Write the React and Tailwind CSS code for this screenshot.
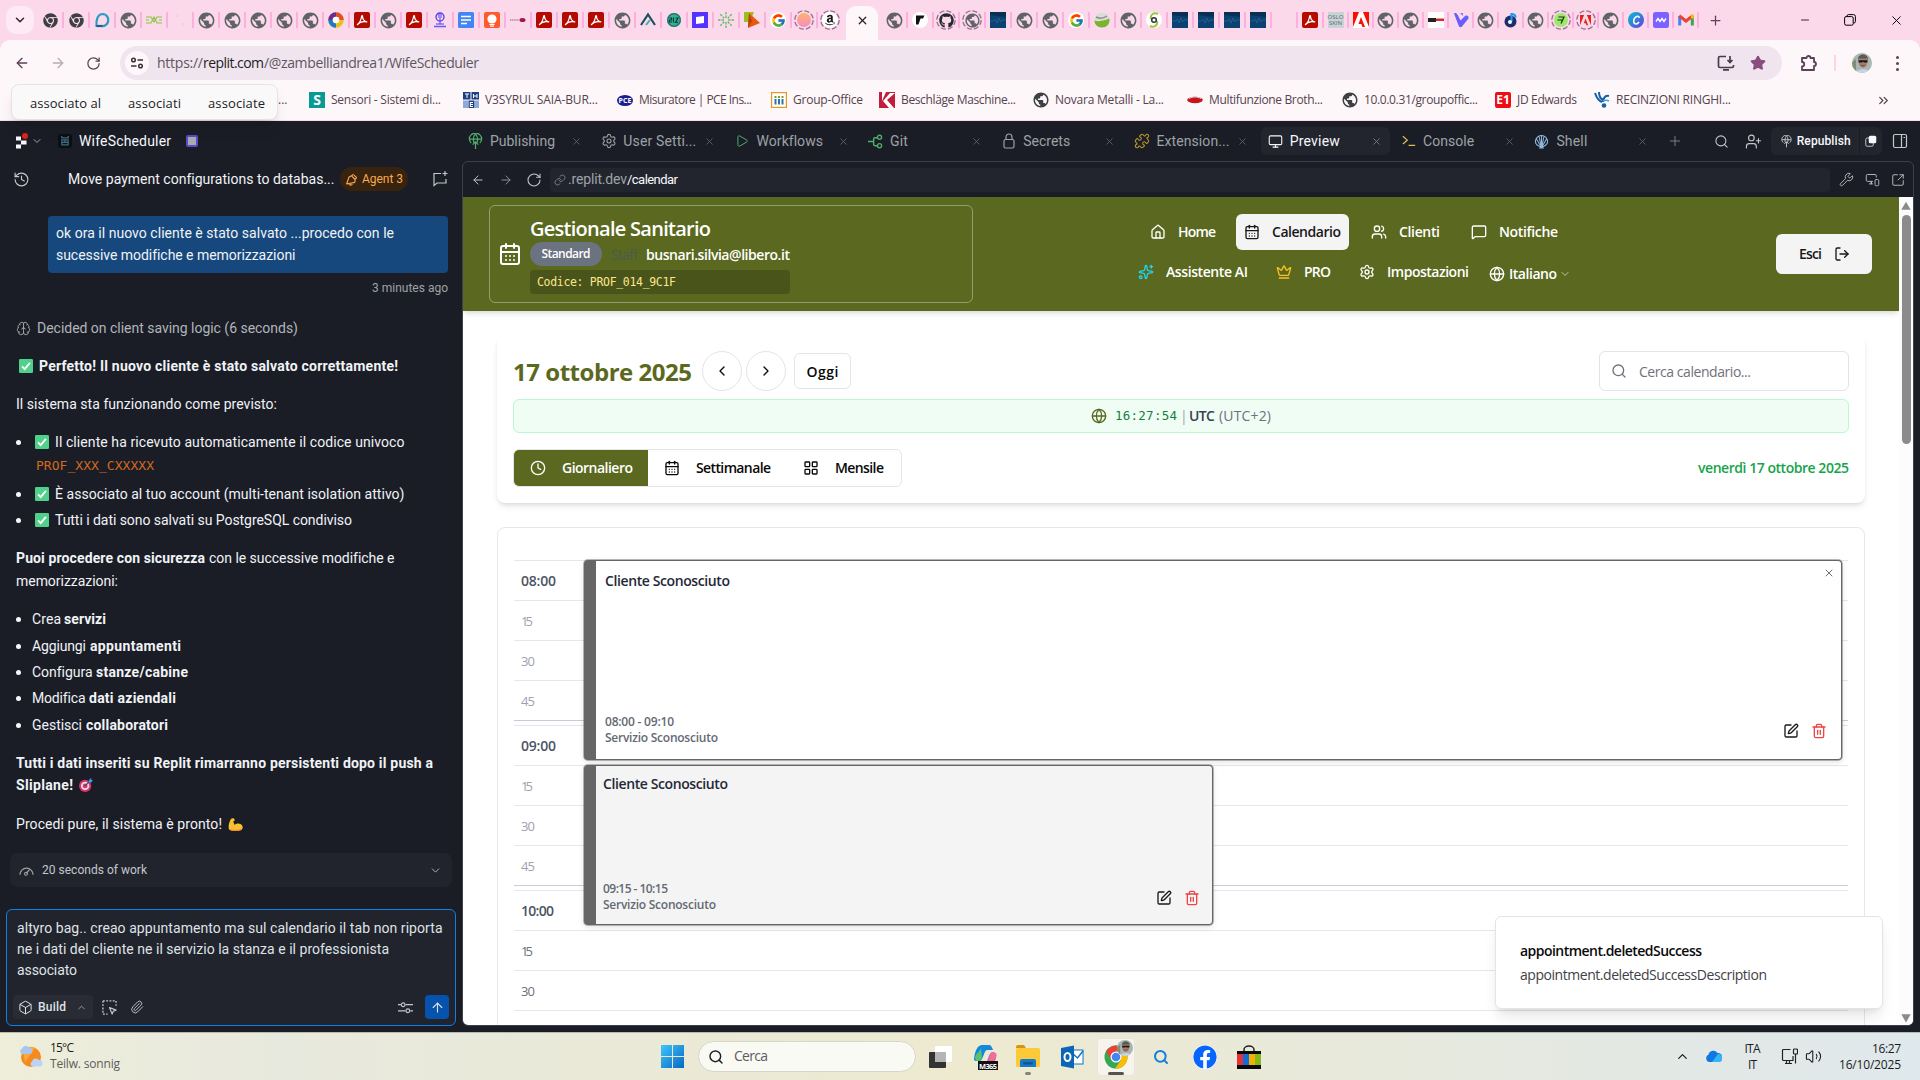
import React, { useLayoutEffect, useRef } from "react";
import {
  ArrowLeft, ArrowRight, RotateCw, ChevronDown, ChevronUp, ChevronLeft, ChevronRight, ChevronsRight,
  X, Plus, Minus, Star, Search, UserPlus, Wrench, MonitorSmartphone, SquareArrowOutUpRight, History,
  Brain, Box, Paperclip, Link, Play, Puzzle, Monitor, Settings, CalendarDays, House, Users,
  MessageSquare, Sparkles, Crown, Globe, LogOut, Clock, LayoutGrid, SquarePen, Trash2, Volume2,
} from "lucide-react";
import { MdPublic } from "react-icons/md";
import { FcGoogle } from "react-icons/fc";
import { FaChrome, FaGithub, FaAmazon, FaFacebook } from "react-icons/fa";

/* Single-line text that spreads its letters to fill the given width. */
function T({ w, className = "", children }) {
  const ref = useRef(null);
  useLayoutEffect(() => {
    const el = ref.current;
    el.style.letterSpacing = "0px";
    const n = String(children).length;
    const natural = el.firstChild.getBoundingClientRect().width;
    if (n > 1) el.style.letterSpacing = (w - natural) / (n - 1) + "px";
  });
  return (
    <span ref={ref} className={"inline-block shrink-0 whitespace-pre " + className} style={{ width: w }}>
      <span>{children}</span>
    </span>
  );
}

/* ------------------------------ favicons ------------------------------ */

function Svg({ s = 16, children, vb = "0 0 16 16", className = "" }) {
  return <svg width={s} height={s} viewBox={vb} fill="none" className={"shrink-0 " + className}>{children}</svg>;
}

function Pdf() {
  return (
    <Svg>
      <rect width="16" height="16" rx="2" fill="#b30b00" />
      <path d="M3.4 12.6c1.6-1 3.6-4.400 4.300-8.400.1-.8.800-.8.800 0 .1 2.600 1.800 5 4.300 5.600M3.400 12.600c2-2.200 5.800-3.500 9.300-2.600" stroke="#fff" strokeWidth="1.200" strokeLinecap="round" />
    </Svg>
  );
}

function Dashed({ children }) {
  return (
    <span className="flex size-5 shrink-0 items-center justify-center">
      <svg width="20" height="20" viewBox="0 0 20 20" fill="none" className="absolute">
        <circle cx="10" cy="10" r="9.200" stroke="#9c7094" strokeWidth="1.300" strokeDasharray="5.200 2.025" />
      </svg>
      {children}
    </span>
  );
}

const PublicIcon = () => <MdPublic size={19} className="shrink-0 text-[#5f6368]" />;
const NavyPic = () => (
  <Svg>
    <rect width="16" height="16" fill="#0b4272" />
    <path d="M0 0h16v5L0 3z" fill="#0a2f55" />
    <path d="M0 9h4l1.500-2 1.500 4 2-5 1.500 4 1.500-2H16" stroke="#2a6796" strokeWidth=".7" />
  </Svg>
);

function Fav({ k }) {
  switch (k) {
    case "chrome": return <FaChrome size={15} className="shrink-0 text-[#3c4043]" />;
    case "globe": return <PublicIcon />;
    case "pdf": return <Pdf />;
    case "navy": return <NavyPic />;
    case "google": return <span className="flex size-4 shrink-0 items-center justify-center rounded-full bg-white"><FcGoogle size={15} /></span>;
    case "drop": return <Svg><path d="M9 2a5.500 5.500 0 1 1-1.500 12H2.500C2 8 3.500 2 9 2Z" stroke="#2a9bc4" strokeWidth="2.200" /><path d="M2.500 14h6" stroke="#1c5f8a" strokeWidth="2.200" /></Svg>;
    case "star": return <Svg><path d="M0 5h5l3 5 3-5h5M0 11h5l3-6 3 6h5M0 8h3M13 8h3" stroke="#8cc63f" strokeWidth="1.100" /></Svg>;
    case "faint": return <Svg><circle cx="5" cy="4" r="1" fill="#f1cbe0" /><circle cx="11" cy="12" r="1.300" fill="#f3cfe2" /></Svg>;
    case "ring": return <Svg><circle cx="8" cy="8" r="5.500" stroke="#e7c21c" strokeWidth="4.500" /><path d="M8 2.500A5.500 5.500 0 0 1 13.500 8" stroke="#e0502d" strokeWidth="4.500" /><path d="M2.500 8A5.500 5.500 0 0 1 8 2.500" stroke="#6a2c91" strokeWidth="4.500" /><path d="M2.500 8A5.500 5.500 0 0 0 8 13.500" stroke="#1b7cc0" strokeWidth="4.500" /><circle cx="8" cy="8" r="3.300" fill="#fff" /></Svg>;
    case "figure": return <Svg><circle cx="8" cy="5" r="4" stroke="#4b3cf0" strokeWidth="1.300" /><path d="M6 3h4M6 5h4M7 7h2M8 9v3M4 12h8" stroke="#4b3cf0" /><path d="M2 14.500h12" stroke="#6a5cf5" strokeWidth="1.600" /></Svg>;
    case "docs": return <Svg><rect width="16" height="16" rx="1.500" fill="#4285f4" /><path d="M3 4.500h10M3 8h10M3 11.500h6" stroke="#fff" strokeWidth="1.700" /></Svg>;
    case "orange": return <Svg><rect width="16" height="16" rx="2" fill="#ff5a2c" /><circle cx="8" cy="7" r="4.600" fill="#fff" /><path d="M5.500 12.500h5M6 14.200h4" stroke="#fff" strokeWidth="1.200" /></Svg>;
    case "brand": return <Svg><path d="M0 8h9" stroke="#b98aa2" strokeWidth="1.300" strokeDasharray="1.500 .6" /><ellipse cx="12.500" cy="8" rx="3" ry="2" fill="#a01848" /></Svg>;
    case "tri": return <Svg><path d="M1 13 8 2.500 15 13" stroke="#1f4d63" strokeWidth="2.200" /><path d="M6 13l4-5" stroke="#31b5a6" strokeWidth="2" /></Svg>;
    case "ball": return <Svg><circle cx="8" cy="8" r="7" fill="#2fb58a" /><circle cx="8" cy="8" r="6.300" stroke="#2c6b78" strokeWidth="1.300" /><path d="M3.500 6h2v2h-2v2h2.500M7.500 5.500v5M9.500 6h2.500l-2.500 4.500H12" stroke="#12354d" strokeWidth="1.200" /></Svg>;
    case "purple": return <Svg><rect width="16" height="16" fill="#5433ff" /><path d="M4 5l8-1v7l-8 1z" fill="#fff" /></Svg>;
    case "burst": return <Svg><path d="M8 0v6M8 10v6M0 8h6M10 8h6M2.300 2.300l4 4M9.700 9.700l4 4M13.700 2.300l-4 4M6.300 9.700l-4 4" stroke="#63b96a" strokeWidth="1.300" strokeDasharray="2.500 1" /></Svg>;
    case "kite": return <Svg><path d="M0 0h10l-4 10H0z" fill="#9bbf1e" /><path d="M5 1l11 10-12 5z" fill="#e8590c" /><path d="M5 1l3 8-4 7z" fill="#b8410a" /></Svg>;
    case "peach": return <Dashed><span className="size-3.5 rounded-full bg-linear-to-b from-[#ffb35c] to-[#f58ac4]" /></Dashed>;
    case "amazon": return <Dashed><span className="flex size-4 items-center justify-center rounded-full bg-white"><FaAmazon size={12} className="text-[#1b1b1b]" /></span></Dashed>;
    case "bolt": return <Svg><circle cx="8" cy="8" r="8" fill="#fff" /><path d="M4 3.500h8.500L11 6.500H8.500l-2 6H4z" fill="#111" /></Svg>;
    case "github": return <Dashed><FaGithub size={15} className="text-[#24292f]" /></Dashed>;
    case "dglobe": return <Dashed><MdPublic size={17} className="text-[#5f6368]" /></Dashed>;
    case "bowl": return <Svg><circle cx="8" cy="8" r="7.500" fill="#d8ddd6" /><path d="M.5 8.500c3 1.500 8 .5 15-2 .5 6-3 9-7.500 9S.5 12.500.5 8.500Z" fill="#7ab42c" /><path d="M2 5c4 2 8 1 11-1" stroke="#8b9188" strokeWidth="1.500" /></Svg>;
    case "swirl": return <Svg><circle cx="8" cy="8" r="8" fill="#fff" /><path d="M12 2C7 0 4 3 5 7M4 14c5 2 8-1 7-5" stroke="#94c83d" strokeWidth="2" /><circle cx="8" cy="8" r="2.300" stroke="#333" strokeWidth="1.500" /></Svg>;
    case "oslo": return <span className="flex h-4 w-4 shrink-0 flex-col items-center justify-center bg-[#c9d3d6] text-[6px] leading-[6px] text-[#59666b]"><span>OSLO</span><span>SKIN</span></span>;
    case "adobe": return <Svg><rect width="16" height="16" fill="#fff" /><path d="M0 0h6L0 15zM16 0h-6l6 15zM8 5l4 10H9.500l-1.200-3H5.500z" fill="#fa0f00" /></Svg>;
    case "pen": return <Svg><rect width="16" height="16" fill="#fff" /><path d="M0 6h8v4H0z" fill="#222" /><path d="M8 6.500h8v2.500H8z" fill="#d42a2a" /></Svg>;
    case "vee": return <Svg><path d="M1 1.500c2-1 3 0 4 2l2.500 5L12 4c2-1 4 0 3.500 2.500L9 14.500c-1 1-2 1-3 0z" fill="#6a5cff" /><path d="M7 1h3v3z" fill="#8a6cff" /></Svg>;
    case "note": return <Svg><circle cx="7.500" cy="9.500" r="6" fill="#1c2f6b" /><path d="M8.500 1v8.500M8.500 2c2 0 4 1 4 3.500" stroke="#2196f3" strokeWidth="2.200" /><circle cx="7" cy="10" r="2" fill="#fff" /></Svg>;
    case "wise": return <Dashed><span className="flex size-3.5 items-center justify-center rounded-full bg-[#9fe870]"><Svg s={8}><path d="M3 2h11l-6 13M1 8h9" stroke="#163300" strokeWidth="2.400" /></Svg></span></Dashed>;
    case "adobeD": return <Dashed><Svg s={11}><path d="M0 0h6L0 15zM16 0h-6l6 15zM8 5l4 10H9.500l-1.200-3H5.500z" fill="#e8231a" /></Svg></Dashed>;
    case "canva": return <Svg><defs><linearGradient id="cv" x1="0" y1="0" x2="1" y2="1"><stop offset="0" stopColor="#00c4cc" /><stop offset="1" stopColor="#6a3be4" /></linearGradient></defs><circle cx="8" cy="8" r="8" fill="url(#cv)" /><path d="M11.200 6c0-3-4.800-2-5.500 2.500-.4 4 3.300 4.500 5.300 1.500" stroke="#fff" strokeWidth="1.500" /></Svg>;
    case "wave": return <Svg><rect width="16" height="16" rx="2.500" fill="#7b61ff" /><path d="M3 9.500l2-3 2 3 2-3 2 3 2-3" stroke="#fff" strokeWidth="1.400" /></Svg>;
    case "gmail": return <Svg><path d="M1.700 4v9.500" stroke="#4285f4" strokeWidth="3" /><path d="M14.300 4v9.500" stroke="#34a853" strokeWidth="3" /><path d="M1.200 3.800 8 9l6.800-5.200" stroke="#ea4335" strokeWidth="3" /><path d="M13 2.500l2.800 0v4l-2.800 0z" fill="#fbbc04" /></Svg>;
    default: return <span className="size-4 shrink-0" />;
  }
}

const TABS_A = ["chrome", "chrome", "drop", "globe", "star", "faint", "globe", "globe", "globe", "globe", "globe", "ring", "pdf", "globe", "pdf", "figure", "docs", "orange", "brand", "pdf", "pdf", "pdf", "globe", "tri", "ball", "purple", "burst", "kite", "google", "peach", "amazon"];
const TABS_B = ["globe", "bolt", "github", "dglobe", "navy", "globe", "globe", "google", "bowl", "globe", "swirl", "navy", "navy", "navy", "navy", "", "pdf"];
const TABS_C = ["oslo", "adobe", "globe", "globe", "pen", "vee", "globe", "note", "globe", "wise", "adobeD", "globe", "canva", "wave", "gmail"];

function MiniTab({ k, wide = true, sep = true }) {
  return (
    <div className={"relative flex h-4 shrink-0 items-center justify-center " + (wide ? "w-[26px]" : "w-[25px]")}>
      <Fav k={k} />
      {sep && <span className="absolute -right-px top-0 h-4 w-[2px] bg-[#fbb0de]" />}
    </div>
  );
}

function TabStrip() {
  return (
    <div className="flex h-10 items-center bg-[#fbd9ea]">
      <div className="ml-1.5 flex size-7 shrink-0 items-center justify-center rounded-[10px] bg-[#feeaf4]"><ChevronDown size={14} strokeWidth={2.600} className="text-[#33262f]" /></div>
      <div className="ml-[3px] flex">
        {TABS_A.map((k, i) => <MiniTab key={i} k={k} sep={i !== TABS_A.length - 1} />)}
      </div>
      <div className="ml-[3px] mt-1.5 flex h-[34px] w-8 shrink-0 items-center justify-center rounded-t-[10px] bg-[#fef7f9]"><X size={13} strokeWidth={2.400} className="mb-1.5 text-[#2b2228]" /></div>
      <div className="ml-[3px] flex">
        {TABS_B.map((k, i) => <MiniTab key={i} k={k} />)}
        {TABS_C.map((k, i) => <MiniTab key={i} k={k} wide={false} />)}
      </div>
      <Plus size={15} className="ml-[10px] shrink-0 text-[#5c4458]" />
      <div className="ml-auto mr-4 flex items-center gap-[33px] text-black">
        <Minus size={12} strokeWidth={1.600} />
        <Svg s={12} vb="0 0 12 12"><path d="M3 2.500V2A1.500 1.500 0 0 1 4.500.600h5A1.900 1.900 0 0 1 11.400 2.500v5A1.500 1.500 0 0 1 10 9h-.5" stroke="#000" /><rect x=".6" y="2.600" width="8.600" height="8.600" rx="1.500" stroke="#000" /></Svg>
        <X size={15} strokeWidth={1.500} />
      </div>
    </div>
  );
}

function Avatar({ small }) {
  return (
    <svg width={small ? 16 : 20} height={small ? 16 : 20} viewBox="0 0 20 20" className="shrink-0 rounded-full">
      <rect width="20" height="20" fill="#a9b7b4" />
      <path d="M0 20V9l4-3v14z" fill="#7d8f78" />
      <ellipse cx="11" cy="9" rx="4.300" ry="5.800" fill="#a87c68" />
      <path d="M6 7.500c-1-8 11-8 10 0l-1.200-2H7.200z" fill="#5b5957" />
      <path d="M6.500 7.200h9v2.200h-3.600l-.9-1-.9 1H6.500z" fill="#16161a" />
      <path d="M8.500 12c1.500 1 3.500 1 5 0" stroke="#6d4a3d" fill="none" />
      <path d="M4 20c1-5 13-5 14 0z" fill="#c8d3e6" />
    </svg>
  );
}

function Toolbar() {
  return (
    <div className="bg-[#fbd9ea]">
      <div className="flex h-[46px] items-center rounded-t-[10px] bg-[#fef7f9] text-[#5a4157]">
        <ArrowLeft size={16} className="ml-[14px]" />
        <ArrowRight size={16} className="ml-5 text-[#b8acb4]" />
        <RotateCw size={15} className="ml-5" />
        <div className="ml-[19px] flex h-[34px] w-[1662px] items-center rounded-full bg-[#f0e5ee]">
          <div className="ml-[5px] flex size-6 items-center justify-center rounded-full bg-[#fdf7fa]">
            <Svg s={14} vb="0 0 14 14"><circle cx="3.500" cy="4" r="1.800" stroke="#3b2f39" strokeWidth="1.500" /><path d="M7.500 4H13M1 10h5.500" stroke="#3b2f39" strokeWidth="1.500" /><circle cx="10.500" cy="10" r="1.800" stroke="#3b2f39" strokeWidth="1.500" /></Svg>
          </div>
          <div className="ml-2 flex text-[14px] leading-5 text-[#5f5560]">
            <T w={46}>https://</T>
            <T w={61} className="text-[#231c22]">replit.com</T>
            <T w={215}>/@zambelliandrea1/WifeScheduler</T>
          </div>
          <Svg s={18} vb="0 0 18 18" className="ml-auto"><path d="M9 2.500H3A1.500 1.500 0 0 0 1.500 4v8A1.500 1.500 0 0 0 3 13.500h12a1.500 1.500 0 0 0 1.500-1.500v-1M13 2v6M10.500 6 13 8.500 15.500 6M6 15.800h6" stroke="#4a3a47" strokeWidth="1.700" /></Svg>
          <Star size={16} fill="#8a4d7e" className="ml-[15px] mr-4 text-[#8a4d7e]" />
        </div>
        <Svg s={20} vb="0 0 20 20" className="ml-[17px]"><path d="M3 5h4.500a2 2 0 0 1 4 0H15v4a2 2 0 0 1 0 4v4H3v-3.500a2.200 2.200 0 0 0 0-4.500z" stroke="#5a4157" strokeWidth="1.800" strokeLinejoin="round" /></Svg>
        <span className="ml-[15px] h-4 w-[2px] bg-[#fbd3ea]" />
        <span className="ml-4"><Avatar /></span>
        <span className="ml-[24px] flex flex-col gap-[3px]"><i className="size-[3px] rounded-full bg-[#5a4157]" /><i className="size-[3px] rounded-full bg-[#5a4157]" /><i className="size-[3px] rounded-full bg-[#5a4157]" /></span>
      </div>
    </div>
  );
}

function Bm({ ml, icon, w, children }) {
  return (
    <div className="flex shrink-0 items-center" style={{ marginLeft: ml }}>
      <span className="flex w-4 shrink-0 justify-center">{icon}</span>
      <T w={w} className="ml-[6px]">{children}</T>
    </div>
  );
}

function Bookmarks() {
  return (
    <div className="relative z-10 flex h-[35px] items-center border-b border-[#f9dcea] bg-[#fef7f9] pb-1.5 text-[12px] text-[#54434f]">
      <span className="w-[278px] shrink-0" />
      <span className="w-[31px] shrink-0">...</span>
      <Bm ml={0} w={110} icon={<span className="flex size-4 items-center justify-center bg-[#0a9a94] text-[14px] font-bold leading-none text-white">S</span>}>Sensori - Sistemi di...</Bm>
      <Bm ml={22} w={113} icon={<Svg><rect width="7.500" height="7.500" fill="#1d3f86" /><rect x="8.500" width="7.500" height="7.500" fill="#1d3f86" /><rect y="8.500" width="5" height="7.500" fill="#8fa9d8" /><rect x="5.500" y="8.500" width="6" height="7.500" fill="#1d3f86" /><rect x="12" y="8.500" width="4" height="7.500" fill="#8fa9d8" /><path d="M2 2h4M4 2v4M10.500 2v4M14 2v4M10.500 4H14M7 10.500h3M7 12.500h3M7 14.500h3M7.300 10v5" stroke="#fff" /></Svg>}>V3SYRUL SAIA-BUR...</Bm>
      <Bm ml={19} w={113} icon={<span className="flex h-[11px] w-4 items-center justify-center rounded-[50%] bg-[#1b1f8c] text-[7px] font-bold leading-none text-white">PCE</span>}>Misuratore | PCE Ins...</Bm>
      <Bm ml={19} w={70} icon={<Svg><rect x=".6" y=".6" width="14.800" height="14.800" fill="#fff" stroke="#e8971e" strokeWidth="1.200" /><path d="M4.500 7v5.500M8 7v5.500M11.500 7v5.500" stroke="#2b78a8" strokeWidth="2" /><path d="M4.500 4v2M8 4v2M11.500 4v2" stroke="#7a9a2a" strokeWidth="2" /></Svg>}>Group-Office</Bm>
      <Bm ml={16} w={115} icon={<Svg><rect width="16" height="16" fill="#c01e3c" /><path d="M3 0l4 0-4 9zM16 1 8 8l7 8H10L4 9l7-8z" fill="#fff" /></Svg>}>Beschläge Maschine...</Bm>
      <Bm ml={17} w={109} icon={<MdPublic size={18} className="shrink-0 text-[#3c4043]" />}>Novara Metalli - La...</Bm>
      <Bm ml={23} w={114} icon={<Svg><ellipse cx="8" cy="8" rx="7.800" ry="3.200" fill="#c4161c" /><path d="M2 6.500c4-2 8-2 12 0" stroke="#d9d9d9" /></Svg>}>Multifunzione Broth...</Bm>
      <Bm ml={19} w={114} icon={<MdPublic size={18} className="shrink-0 text-[#3c4043]" />}>10.0.0.31/groupoffic...</Bm>
      <Bm ml={17} w={60} icon={<span className="flex size-4 items-center justify-center rounded-xs bg-[#ee0d12] text-[12px] font-bold leading-none text-white">E1</span>}>JD Edwards</Bm>
      <Bm ml={17} w={115} icon={<Svg><path d="M1 1c2 6 4 8 7 9M5 0c0 5 2 7 4 8M15 4c-5-1-6 4-6 6" stroke="#1660a8" strokeWidth="2" /><path d="M9 9c2-1 4-1 6 0" stroke="#3aa5e0" strokeWidth="1.600" /><circle cx="10" cy="13.500" r="2.300" fill="#1660a8" /></Svg>}>RECINZIONI RINGHI...</Bm>
      <ChevronsRight size={15} strokeWidth={2} className="ml-auto mr-[29px]" />
      <div className="absolute left-[11px] top-[-2px] flex h-9 w-[267px] items-center rounded-lg border border-[#e8e2e6] bg-[#faf9fa] pl-[18px] pt-[3px] text-[13px] text-[#1c1c1c] shadow-lg">
        <T w={71}>associato al</T>
        <T w={53} className="ml-[27px]">associati</T>
        <T w={57} className="ml-[27px]">associate</T>
      </div>
    </div>
  );
}

/* ------------------------------ editor shell ------------------------------ */

const Tree = ({ s = 17, c = "#4fae6b" }) => (
  <Svg s={s} vb="0 0 18 18"><path d="M4.500 10.500A6.500 6 0 1 1 13.500 10.500M9 1c-2.500 3-2.500 7-1.500 9.500M9 1c2.500 3 2.500 7 1.500 9.500M2.800 6.500h12.400M9 17V9.500M6 12.300 9 9.300l3 3" stroke={c} strokeWidth="1.300" /></Svg>
);

function EdTab({ icon, label, w, active }) {
  return (
    <div className={"mr-[4.300px] flex h-7 w-[129px] shrink-0 items-center rounded-md pl-[6px] " + (active ? "bg-[#23252e] text-[#f5f9fc]" : "text-[#9da2a6]")}>
      <span className="flex w-[17px] shrink-0 justify-center">{icon}</span>
      <T w={w} className="ml-[6px] text-[14px]">{label}</T>
      <X size={11} strokeWidth={1.700} className={"ml-auto mr-2 shrink-0 " + (active ? "text-[#858a92]" : "text-[#666b75]")} />
    </div>
  );
}

function EditorHeader() {
  return (
    <div className="flex h-10 shrink-0 items-center font-['Roboto',sans-serif] text-[#f5f9fc]">
      <div className="flex w-[461px] shrink-0 items-center">
        <Svg s={16} vb="0 0 16 16" className="ml-[15px]"><path d="M1 3.500h5v4H1zM6 7.500h5.500v4H6zM1 11.500h5v4H1z" fill="#f5f9fc" /><circle cx="10" cy="3" r="3" fill="#e5201c" /></Svg>
        <ChevronDown size={12} className="text-[#9da2a6]" />
        <span className="ml-[15px] flex size-[14px] items-center justify-center rounded-[3px] bg-[#0b0f14]"><Svg s={10}><path d="M2 3h12M3 6h10v8H3zM3 10h10M8 6v4M4 3 2 0M12 3l2-3" stroke="#3c6c80" strokeWidth="2" /></Svg></span>
        <T w={92} className="ml-[7px] text-[14px]">WifeScheduler</T>
        <span className="ml-[15px] size-3 rounded-[2px] border-2 border-[#5b4bc4] bg-[#a7abb4]" />
      </div>
      <EdTab icon={<Tree />} label="Publishing" w={65} />
      <EdTab icon={<Settings size={16} strokeWidth={1.600} />} label="User Setti..." w={73} />
      <EdTab icon={<Play size={14} strokeWidth={1.700} className="text-[#4fae6b]" />} label="Workflows" w={66} />
      <EdTab icon={<Svg s={15}><path d="M0 8h6M6 8v-2.500a1.500 1.500 0 0 1 1.500-1.500H10M6 8v3a1.500 1.500 0 0 0 1.500 1.500H10" stroke="#4fae6b" strokeWidth="1.500" /><circle cx="12.300" cy="3.500" r="2.200" stroke="#4fae6b" strokeWidth="1.400" /><circle cx="12.300" cy="12.500" r="2.200" stroke="#4fae6b" strokeWidth="1.400" /></Svg>} label="Git" w={18} />
      <EdTab icon={<Svg s={16}><rect x="3" y="6.500" width="10" height="8.500" rx="1.500" stroke="#9da2a6" strokeWidth="1.200" /><path d="M5 6.500V4a3 3 0 0 1 6 0v2.500" stroke="#9da2a6" strokeWidth="1.200" /></Svg>} label="Secrets" w={47} />
      <EdTab icon={<Puzzle size={16} strokeWidth={1.600} className="text-[#b8962a]" />} label="Extension..." w={73} />
      <EdTab icon={<Monitor size={15} strokeWidth={1.700} />} label="Preview" w={50} active />
      <EdTab icon={<Svg s={14}><path d="M1 2.500 6 7l-5 4.500M7.500 13H15" stroke="#d9bd52" strokeWidth="1.500" /></Svg>} label="Console" w={51} />
      <EdTab icon={<Svg s={15}><path d="M8 14.500 3 11.500C-.5 7.500 3 1.500 8 1.500s8.500 6 5 10zM8 14.500V2M8 14.500 5.300 2.300M8 14.500l2.700-12.200M8 14.500 2.500 5M8 14.500 13.500 5M5.500 15h5" stroke="#8fb8e0" strokeWidth="1.100" /></Svg>} label="Shell" w={31} />
      <Plus size={16} strokeWidth={1.400} className="ml-[6px] shrink-0 text-[#7e838b]" />
      <Search size={15} strokeWidth={1.700} className="ml-[31px] shrink-0 text-[#c2c8cc]" />
      <UserPlus size={17} strokeWidth={1.600} className="ml-[16px] shrink-0 text-[#c2c8cc]" />
      <div className="ml-[9px] flex h-7 w-[88px] shrink-0 items-center rounded-l-md bg-[#23252e] pl-[9px]">
        <Tree s={13} c="#c2c8cc" /><T w={54} className="ml-[4px] text-[12px] font-medium">Republish</T>
      </div>
      <div className="ml-px flex h-7 w-[22px] shrink-0 items-center justify-center rounded-r-md bg-[#23252e]"><Svg s={12}><rect x="1" y="4" width="10" height="11" rx="2" stroke="#c2c8cc" strokeWidth="1.300" /><rect x="5" y="1" width="10" height="10" rx="2" fill="#f5f9fc" /></Svg></div>
      <Svg s={16} className="ml-[10px]"><rect x="1.500" y="1.500" width="13" height="13" rx="1.500" stroke="#c2c8cc" strokeWidth="1.200" /><path d="M9.500 1.500v13M11.500 4.500h1.500" stroke="#c2c8cc" strokeWidth="1.200" /></Svg>
    </div>
  );
}

const Check = () => <Svg s={14} className="mr-[6px]"><rect width="16" height="16" rx="1.500" fill="#4fd18b" /><path d="M3.500 8.500 6.500 11.500 12.500 4.500" stroke="#fff" strokeWidth="2.200" /></Svg>;
const Dot = () => <span className="mr-[11px] size-[5px] shrink-0 rounded-full bg-[#f5f9fc]" />;

function Item({ mt, pre, pw, bold, bw, gap = 4 }) {
  return (
    <div className={"flex h-[22px] items-center " + mt}>
      <Dot />
      <T w={pw}>{pre}</T>
      <span style={{ width: gap }} />
      <T w={bw} className="font-bold">{bold}</T>
    </div>
  );
}

function Chat() {
  return (
    <div className="flex w-[462px] shrink-0 flex-col font-['Roboto',sans-serif] text-[14px] text-[#f0f3f6]">
      <div className="flex h-9 items-center">
        <History size={17} strokeWidth={1.600} className="ml-[13px] text-[#c2c8cc]" />
        <T w={266} className="ml-[38px]">Move payment configurations to databas...</T>
        <div className="ml-[6px] flex h-6 w-[68px] items-center rounded-full bg-[#38230f] pl-[5px] text-[#fba94c]">
          <Svg s={13}><path d="M2 13.500 5 5l3-1.500L12.500 8l-.5 3.500zM8 3.500l2.500-2M12.500 8l2-2.500M5.500 13l.8 2 3-.8M11 2.500l3 3" stroke="#fba94c" strokeWidth="1.400" strokeLinejoin="round" /></Svg>
          <T w={41} className="ml-[4px] text-[12px]">Agent 3</T>
        </div>
        <Svg s={16} className="ml-6"><path d="M9 2.500H2v12l3-2.500h9V8M13 0v5M10.500 2.500h5" stroke="#c2c8cc" strokeWidth="1.200" /></Svg>
      </div>
      <div className="ml-12 mt-[19px] flex h-[57px] w-[400px] flex-col rounded-sm bg-[#16487d] pl-2 pt-[6px] leading-[22px]">
        <T w={338}>ok ora il nuovo cliente è stato salvato ...procedo con le</T>
        <T w={239}>sucessive modifiche e memorizzazioni</T>
      </div>
      <div className="mt-[5px] flex h-5 items-center pl-[372px] text-[12px] text-[#9da2a6]"><T w={76}>3 minutes ago</T></div>
      <div className="flex flex-col pl-4">
        <div className="mt-[19px] flex h-[22px] items-center text-[#b0b5ba]"><Brain size={15} strokeWidth={1.300} className="mr-[6px]" /><T w={261}>Decided on client saving logic (6 seconds)</T></div>
        <div className="mt-4 flex h-[22px] items-center pl-[3px]"><Check /><T w={359} className="font-bold">Perfetto! Il nuovo cliente è stato salvato correttamente!</T></div>
        <div className="mt-4 flex h-[22px] items-center"><T w={261}>Il sistema sta funzionando come previsto:</T></div>
        <div className="mt-4 flex h-[22px] items-center"><Dot /><span className="w-[3px]" /><Check /><T w={349.500}>Il cliente ha ricevuto automaticamente il codice univoco</T></div>
        <div className="mt-[2px] flex h-[22px] items-center pl-5 font-['DejaVu_Sans_Mono',monospace] text-[13px] text-[#d2691e]"><T w={118}>PROF_XXX_CXXXXX</T></div>
        <div className="mt-[6px] flex h-[22px] items-center"><Dot /><span className="w-[3px]" /><Check /><T w={349.500}>È associato al tuo account (multi-tenant isolation attivo)</T></div>
        <div className="mt-1 flex h-[22px] items-center"><Dot /><span className="w-[3px]" /><Check /><T w={297}>Tutti i dati sono salvati su PostgreSQL condiviso</T></div>
        <div className="mt-4 flex h-[22px] items-center"><T w={189} className="font-bold">Puoi procedere con sicurezza</T><T w={185} className="ml-[4px]">con le successive modifiche e</T></div>
        <div className="mt-px flex h-[22px] items-center"><T w={102}>memorizzazioni:</T></div>
        <Item mt="mt-4" pre="Crea" pw={29} bold="servizi" bw={42} gap={3} />
        <Item mt="mt-[5px]" pre="Aggiungi" pw={54} bold="appuntamenti" bw={91} />
        <Item mt="mt-1" pre="Configura" pw={60} bold="stanze/cabine" bw={92} />
        <Item mt="mt-1" pre="Modifica" pw={53} bold="dati aziendali" bw={87} />
        <Item mt="mt-[5px]" pre="Gestisci" pw={50} bold="collaboratori" bw={82} />
        <div className="mt-[17px] flex h-[21px] items-center font-bold"><T w={417}>Tutti i dati inseriti su Replit rimarranno persistenti dopo il push a</T></div>
        <div className="flex h-[22px] items-center font-bold">
          <T w={57}>Sliplane!</T>
          <Svg s={14} className="ml-[6px]"><circle cx="7" cy="9" r="7" fill="#d8336b" /><circle cx="7" cy="9" r="4.800" fill="#f4dbe5" /><circle cx="7" cy="9" r="2.800" fill="#d8336b" /><path d="m7 9 5-5" stroke="#23507a" strokeWidth="1.300" /><path d="m11 5 .5-3L14 0v2.300l2 .2-2 2.500z" fill="#3b9be8" /></Svg>
        </div>
        <div className="mt-[17px] flex h-[22px] items-center">
          <T w={206}>Procedi pure, il sistema è pronto!</T>
          <Svg s={15} className="ml-[6px]"><path d="M3 2.500C4 .8 6.500 1 7 2.500c.4 1.300-.5 2-1.500 2L7 8.500c2-2.200 6.500-2.200 8.300.8 1.300 3.200-.8 5.200-4.300 5.400-4 .2-8 0-9.600-1.200C-.2 11.500 1 6 3 2.500Z" fill="#fbc02d" /><path d="M1 12.500c3 1.500 10 2 14-.5-1 2.500-4 2.800-7 2.800s-6-.6-7-2.300Z" fill="#f2883a" /></Svg>
        </div>
      </div>
      <div className="ml-[10px] mt-[18px] flex h-[34px] w-[442px] items-center rounded-lg bg-[#22242d] text-[12px] text-[#c2c8cc]">
        <Svg s={15} className="ml-[9px]"><path d="M1 12.500A7 7 0 1 1 15 12.500M7.500 11l3.500-3.500" stroke="#9da2a6" strokeWidth="1.300" /><circle cx="7.500" cy="11.500" r="1.600" stroke="#9da2a6" strokeWidth="1.100" /></Svg>
        <T w={105} className="ml-2">20 seconds of work</T>
        <ChevronDown size={13} strokeWidth={1.600} className="ml-auto mr-[10px]" />
      </div>
      <div className="ml-[6px] mt-[22px] flex h-[117px] w-[450px] flex-col rounded-md border border-[#0f7fe8] bg-[#22242d] text-[#dfe3e6]">
        <div className="flex flex-col pl-[10px] pt-2 leading-[21px]">
          <T w={425.500}>altyro bag.. creao appuntamento ma sul calendario il tab non riporta</T>
          <T w={372}>ne i dati del cliente ne il servizio la stanza e il professionista</T>
          <T w={60}>associato</T>
        </div>
        <div className="mt-[14px] flex h-6 items-center px-[6px]">
          <div className="flex h-6 w-20 items-center rounded-sm bg-[#292b35] pl-[5px]">
            <Box size={15} strokeWidth={1.600} /><T w={28} className="ml-[5px] text-[12px] font-medium">Build</T>
            <ChevronUp size={11} className="ml-[10px] text-[#9da2a6]" />
          </div>
          <Svg s={15} className="ml-[9px]"><path d="M1 1h14v5M1 1v14h5" stroke="#c2c8cc" strokeWidth="1.400" strokeDasharray="2 1.500" /><path d="m8 8 7 2.800-3 1.200-1.200 3z" stroke="#c2c8cc" strokeWidth="1.200" strokeLinejoin="round" /></Svg>
          <Paperclip size={14} strokeWidth={1.600} className="ml-[13px] text-[#c2c8cc]" />
          <Svg s={15} className="ml-auto"><path d="M0 5h3M8 5h8M0 11.500h8M13 11.500h3" stroke="#c2c8cc" strokeWidth="1.300" /><circle cx="5.500" cy="5" r="2" stroke="#c2c8cc" strokeWidth="1.200" /><circle cx="10.500" cy="11.500" r="2" stroke="#c2c8cc" strokeWidth="1.200" /></Svg>
          <div className="ml-3 flex h-6 w-6 items-center justify-center rounded-sm bg-[#0653ad]"><ArrowRight size={15} strokeWidth={1.800} className="-rotate-90" /></div>
        </div>
      </div>
    </div>
  );
}

/* ------------------------------ calendar app ------------------------------ */

function NavItem({ icon, w, label, active, className = "" }) {
  return (
    <div className={"flex h-9 items-center gap-3 rounded-md px-2 " + (active ? "bg-[#f4f4f4] text-[#18181b] " : "text-white ") + className}>
      {icon}<T w={w} className="pb-[2px] font-semibold">{label}</T>
    </div>
  );
}

function AppHeader() {
  return (
    <div className="relative z-10 flex h-[114px] shrink-0 bg-[#5b6920] text-[14px] text-white shadow-md">
      <div className="ml-[26px] mt-2 flex h-[98px] w-[484px] items-center gap-2 rounded-md border border-white/35 pl-2">
        <CalendarDays size={24} />
        <div className="flex flex-col">
          <T w={181} className="h-7 pt-px text-[20px] font-semibold leading-7">Gestionale Sanitario</T>
          <div className="flex h-6 items-center">
            <span className="flex h-6 w-[72px] items-center justify-center rounded-full bg-[#6b7280] text-[12px]"><T w={49} className="font-semibold">Standard</T></span>
            <T w={27} className="ml-[9px] text-[#4b5b4c]">Staff</T>
            <T w={144} className="ml-2 font-semibold">busnari.silvia@libero.it</T>
          </div>
          <div className="mt-1 flex h-6 w-[260px] items-center rounded-sm bg-[#49541a] pl-[7px] pt-px font-['DejaVu_Sans_Mono',monospace] text-[11.500px] text-[#fde68a]"><T w={139}>Codice: PROF_014_9C1F</T></div>
        </div>
      </div>
      <div className="ml-[157px] flex flex-col gap-1 pt-[17px]">
        <div className="flex pl-3">
          <NavItem icon={<House size={16} />} w={38} label="Home" />
          <NavItem icon={<CalendarDays size={16} />} w={69} label="Calendario" active className="ml-3" />
          <NavItem icon={<Users size={16} />} w={41} label="Clienti" className="ml-[14px]" />
          <NavItem icon={<MessageSquare size={16} />} w={59} label="Notifiche" className="ml-[15px]" />
        </div>
        <div className="flex">
          <NavItem icon={<Sparkles size={16} className="text-[#22d3ee]" />} w={82} label="Assistente AI" />
          <NavItem icon={<Crown size={16} className="text-[#fbbf24]" />} w={27} label="PRO" className="ml-3" />
          <NavItem icon={<Settings size={16} />} w={82} label="Impostazioni" className="ml-3" />
          <div className="ml-3 flex h-10 items-center">
            <Globe size={16} /><T w={48} className="ml-1 pb-px font-semibold">Italiano</T><ChevronDown size={12} className="ml-[2px] text-white/60" />
          </div>
        </div>
      </div>
      <div className="ml-auto mr-[27px] mt-[37px] flex h-10 w-24 items-center rounded-md bg-[#f4f4f4] pl-[23px] text-[#18181b]">
        <T w={23} className="pb-px font-semibold">Esci</T><LogOut size={16} className="ml-3" />
      </div>
    </div>
  );
}

function DateCard() {
  return (
    <div className="ml-[34px] mt-6 flex h-[168px] w-[1368px] shrink-0 flex-col rounded-lg bg-white px-4 pt-4 text-[14px] text-[#0a0a0a] shadow-md">
      <div className="flex h-10 items-center">
        <T w={179} className="pt-[2px] text-[24px] font-bold text-[#5b6920]">17 ottobre 2025</T>
        <span className="ml-[10px] flex size-10 items-center justify-center rounded-full border border-[#e4e4e7]"><ChevronLeft size={16} /></span>
        <span className="ml-1 flex size-10 items-center justify-center rounded-full border border-[#e4e4e7]"><ChevronRight size={16} /></span>
        <span className="ml-2 flex h-9 w-[57px] items-center justify-center rounded-md border border-[#e4e4e7]"><T w={32} className="font-semibold">Oggi</T></span>
        <div className="ml-auto flex h-10 w-[250px] items-center rounded-md border border-[#e4e4e7] pl-[11px] text-[#71717a]">
          <Search size={16} className="text-[#6b7280]" /><T w={112} className="ml-3">Cerca calendario...</T>
        </div>
      </div>
      <div className="mt-2 flex h-[34px] items-center justify-center rounded-md border border-[#bbf7d0] bg-[#f0fdf4]">
        <Globe size={16} className="text-[#5b6920]" />
        <T w={62} className="ml-2 font-['DejaVu_Sans_Mono',monospace] text-[12.500px] text-[#15803d]">16:27:54</T>
        <span className="ml-[3px] w-[5px] pb-[2px] text-[#9ca3af]">|</span>
        <T w={26} className="ml-1 pb-[2px] font-semibold text-[#374151]">UTC</T>
        <T w={52} className="ml-1 pb-[2px] text-[#6b7280]">(UTC+2)</T>
      </div>
      <div className="mt-4 flex h-[38px] items-center justify-between">
        <div className="flex h-[38px] w-[389px] overflow-hidden rounded-md border border-[#e4e4e7]">
          <div className="flex h-full w-[134px] items-center bg-[#5b6920] pl-4 text-white"><Clock size={16} /><T w={71} className="ml-4 pb-[2px] font-semibold">Giornaliero</T></div>
          <div className="flex items-center pl-4"><CalendarDays size={16} /><T w={75} className="ml-4 pb-[2px] font-semibold">Settimanale</T></div>
          <div className="flex items-center pl-8"><LayoutGrid size={16} /><T w={49} className="ml-4 pb-[2px] font-semibold">Mensile</T></div>
        </div>
        <T w={151} className="pb-[2px] font-semibold text-[#16a34a]">venerdì 17 ottobre 2025</T>
      </div>
    </div>
  );
}

function Hour({ label, dim = true, last = false }) {
  return (
    <div className="mb-1 flex shrink-0 flex-col border-t border-[#e5e7eb] text-[13px]">
      <div className="flex h-10 items-center border-b border-[#e5e7eb] pl-[7px] text-[14px] font-semibold text-[#4b5563]"><T w={label === "10:00" ? 33 : 35}>{label}</T></div>
      <div className={"flex h-10 items-center border-b border-[#e5e7eb] pl-[7px] pt-[2px] " + (dim ? "text-[#9ca3af]" : "text-[#6b7280]")}><T w={12}>15</T></div>
      <div className={"flex h-10 items-center border-b border-[#e5e7eb] pl-[7px] pt-[2px] " + (dim ? "text-[#9ca3af]" : "text-[#6b7280]")}><T w={14}>30</T></div>
      {!last && <div className="flex h-10 items-center border-b border-[#c9ccd6] pl-[7px] pt-[2px] text-[#9ca3af]"><T w={14}>45</T></div>}
    </div>
  );
}

function Appt({ time, tw, place, pad, actions, close }) {
  return (
    <div className={"absolute flex flex-col rounded-sm border border-l-[12px] border-[#666] shadow-[0_0_0_1px_rgba(102,102,102,0.45),0_2px_6px_rgba(0,0,0,0.12)] " + place}>
      <div className={"flex h-full flex-col justify-between " + pad}>
        <T w={125} className="text-[14px] font-semibold leading-5 text-[#1f2937]">Cliente Sconosciuto</T>
        <div className="flex flex-col text-[12px] font-semibold leading-4 text-[#646973]">
          <T w={tw}>{time}</T>
          <T w={113}>Servizio Sconosciuto</T>
        </div>
      </div>
      <div className={"absolute flex gap-3 " + actions}>
        <SquarePen size={16} className="text-[#18181b]" /><Trash2 size={16} className="text-[#ef4444]" />
      </div>
      {close && <X size={12} className="absolute right-[6px] top-[6px] text-[#6b7280]" />}
    </div>
  );
}

function Schedule() {
  return (
    <div className="relative ml-[34px] mt-6 flex h-[600px] w-[1368px] shrink-0 flex-col rounded-lg border border-[#e5e7eb] px-4 pt-8">
      <Hour label="08:00" />
      <Hour label="09:00" />
      <Hour label="10:00" dim={false} last />
      <Appt close time="08:00 - 09:10" tw={69} place="left-[86px] top-[32px] h-[200px] w-[1258px] bg-white" pad="pl-[9px] pt-[10px] pb-[13px]" actions="bottom-[20px] right-[14px]" />
      <Appt time="09:15 - 10:15" tw={65} place="left-[86px] top-[237px] h-[160px] w-[629px] bg-[#f4f4f4]" pad="pl-[7px] pt-[8px] pb-[11px]" actions="bottom-[18px] right-[12px]" />
    </div>
  );
}

function Preview() {
  return (
    <div className="h-[865px] w-[1452px] shrink-0 overflow-hidden rounded-md border border-[#3c404b] bg-[#1b1d26]">
      <div className="flex h-[35px] items-center font-['Roboto',sans-serif] text-[14px] text-[#c2c8cc]">
        <ArrowLeft size={14} strokeWidth={1.700} className="ml-2" />
        <ArrowRight size={14} strokeWidth={1.700} className="ml-[14px] text-[#8a8f97]" />
        <RotateCw size={16} strokeWidth={1.600} className="ml-[13px]" />
        <div className="ml-2 flex h-6 w-[1280px] items-center rounded-sm bg-[#23252e] pl-1">
          <Link size={12} strokeWidth={1.600} className="text-[#8a8f97]" />
          <T w={59} className="ml-[2px] text-[#9da2a6]">.replit.dev</T>
          <T w={51} className="text-[13px] text-[#f5f9fc]">/calendar</T>
        </div>
        <Wrench size={15} strokeWidth={1.400} className="ml-[9px]" />
        <MonitorSmartphone size={15} strokeWidth={1.400} className="ml-[11px]" />
        <SquareArrowOutUpRight size={14} strokeWidth={1.500} className="ml-[11px]" />
      </div>
      <div className="relative flex h-[828px] bg-white">
        <div className="flex w-[1436px] shrink-0 flex-col overflow-hidden">
          <AppHeader />
          <DateCard />
          <Schedule />
        </div>
        <div className="flex w-[14px] shrink-0 flex-col items-center bg-[#fcfcfc] pt-[4px]">
          <Svg s={10}><path d="M8 1 15.500 14H.5z" fill="#8b8b8b" /></Svg>
          <span className="mt-[4px] h-[229px] w-[9px] rounded-full bg-[#8b8b8b]" />
          <Svg s={10} className="mb-[2px] mt-auto"><path d="M8 15 .5 2h15z" fill="#8b8b8b" /></Svg>
        </div>
        <div className="absolute bottom-[16px] right-[30px] z-20 flex h-[93px] w-[388px] flex-col rounded-md border border-[#e4e4e7] bg-white pl-6 pt-6 text-[14px] leading-5 text-[#0a0a0a] shadow-lg">
          <T w={182} className="font-semibold">appointment.deletedSuccess</T>
          <T w={247} className="mt-1 text-[#3f3f46]">appointment.deletedSuccessDescription</T>
        </div>
      </div>
    </div>
  );
}

/* ------------------------------ taskbar ------------------------------ */

function Taskbar() {
  return (
    <div className="flex h-12 shrink-0 items-center border-t border-[#b9b9b0] bg-linear-to-r from-[#eeeed9] from-0% via-[#e6e9e4] via-15% to-[#dbe7ef] text-[12px] text-[#1b1b1b]">
      <div className="flex h-full flex-1 items-center bg-linear-to-r from-[#e4e9e700] via-[#eeead0] to-[#dfe8ec]">
        <Svg s={24} vb="0 0 24 24" className="ml-[19px]"><circle cx="12" cy="12" r="10" fill="#f58a1f" /><path d="M4 6a9 9 0 0 1 12-3L6 17z" fill="#f9a93a" /><path d="M3 9a3 3 0 0 1 0-5.500 4 4 0 0 1 7-1A3 3 0 0 1 13 5.500 2.500 2.500 0 0 1 11.500 9z" fill="#a9c6f2" /><path d="M13 21.500a3 3 0 0 1 0-5 4 4 0 0 1 7-1.500c2 .2 3.500 1.500 3.500 3.500a3 3 0 0 1-2 3z" fill="#bcd3f7" /></Svg>
        <div className="ml-[7px] flex w-[611px] flex-col pb-px leading-[16px]"><T w={24}>15°C</T><T w={70} className="text-[#5c5c5c]">Teilw. sonnig</T></div>
        <Svg s={23} vb="0 0 23 23"><defs><linearGradient id="win" x1="0" y1="0" x2="1" y2="1"><stop offset="0" stopColor="#3fc6f8" /><stop offset="1" stopColor="#0668c4" /></linearGradient></defs><path d="M0 0h11v11H0zM12 0h11v11H12zM0 12h11v11H0zM12 12h11v11H12z" fill="url(#win)" /></Svg>
        <div className="ml-[14px] flex h-[31px] w-[218px] items-center rounded-full border border-[#d6d6c8] bg-[#fafaf5] text-[14px] text-[#5c5c5c]"><Search size={16} strokeWidth={2.200} className="ml-[9px] text-[#222]" /><T w={34} className="ml-[10px] pb-[2px]">Cerca</T></div>
        <Svg s={24} vb="0 0 24 24" className="ml-[13px]"><rect x="0" y="7" width="17" height="16" rx="1" fill="#333" /><rect x="6" y="1" width="17" height="16" rx="1" fill="#fff" /><rect x="6" y="7" width="11" height="10" fill="#b5b5b5" /></Svg>
        <span className="ml-[19px] flex w-[26px] flex-col items-center">
          <Svg s={26} vb="0 0 26 26"><path d="M2 15C3 6 6 1 10 1h7c2 0 3 2 4 5h-6c-3 0-4 11-7 11H4c-1.500 0-2-1-2-2z" fill="#1389dd" /><path d="M3 13c2-5 4-4 6-9l1 10c-2 4-7 4-7-1z" fill="#58c271" /><path d="M24.500 11c-1 8-4 10-7 10h-5c3-1 4-13 8-13 2 0 4 1 4 3z" fill="#c25bd8" /><path d="M19 9c4-1 6 1 5 4l-3 6-5-1z" fill="#f0708f" /><rect x="6" y="17" width="20" height="9" fill="#111" /><text x="7" y="24.500" fontSize="7.500" fontWeight="700" fill="#fff" textLength="18">M365</text></Svg>
        </span>
        <span className="ml-[18px] flex w-6 flex-col items-center pt-[6px]"><Svg s={24} vb="0 0 24 24"><path d="M0 3a2 2 0 0 1 2-2h6l2 3H0z" fill="#d9930f" /><rect y="4" width="24" height="19" rx="1.500" fill="#fcc938" /><path d="M4 23v-6a2 2 0 0 1 2-2h12a2 2 0 0 1 2 2v6z" fill="#1678c8" /><rect x="7" y="18" width="10" height="2.500" rx="1" fill="#0f5896" /></Svg><i className="mt-[4px] h-[3px] w-[6px] rounded-full bg-[#85857c]" /></span>
        <Svg s={24} vb="0 0 24 24" className="ml-[20px]"><rect x="12" y="5" width="11" height="14" fill="#fff" stroke="#1172c8" /><path d="m12 8 5.500 5L23 6" stroke="#1172c8" strokeWidth="1.500" /><path d="M1 3l13-2.500v23L1 21z" fill="#0a67b8" /><ellipse cx="7.500" cy="12" rx="3" ry="4" stroke="#fff" strokeWidth="2" /></Svg>
        <span className="relative ml-[13px] flex h-[38px] w-[38px] flex-col items-center rounded-sm border border-[#e8e6dc] bg-[#f6f4ec] pt-[6px]">
          <svg width="24" height="24" viewBox="0 0 24 24" className="shrink-0"><circle cx="12" cy="12" r="11.500" fill="#34a853" /><path d="M12 12V6.200h10A11.500 11.500 0 0 1 11 23.500L17 15z" fill="#fbbc05" /><path d="M2.200 6A11.500 11.500 0 0 1 22 6.500H12L7 15z" fill="#ea4335" /><circle cx="12" cy="12" r="5.500" fill="#fff" /><circle cx="12" cy="12" r="4.300" fill="#4285f4" /></svg>
          <i className="mt-[3px] h-[3px] w-4 shrink-0 rounded-full bg-[#55534d]" />
          <span className="absolute right-[1px] top-[1px]"><Avatar small /></span>
        </span>
        <Search size={16} strokeWidth={3} className="ml-[18px] text-[#1c7ed6]" />
        <FaFacebook size={24} className="ml-[24px] rounded-full bg-white text-[#0866ff]" />
        <Svg s={24} vb="0 0 24 24" className="ml-[20px]"><path d="M7 8V4.500a5 3.500 0 0 1 10 0V8" stroke="#222" strokeWidth="1.500" /><rect y="6" width="24" height="18" fill="#0a0a0a" /><rect y="9" width="6" height="11" fill="#e53238" /><rect x="6" y="9" width="6" height="11" fill="#0f6fd6" /><rect x="12" y="9" width="6" height="11" fill="#f5af02" /><rect x="18" y="9" width="6" height="11" fill="#86b817" /></Svg>
        <ChevronUp size={15} className="ml-auto" />
        <Svg s={17} vb="0 0 17 17" className="ml-[15px]"><path d="M4 14a4 4 0 0 1-.5-7.500A5 5 0 0 1 12.500 5 4.500 4.500 0 0 1 13.500 14z" fill="#1079e0" /><path d="M7 14l6-8a4 4 0 0 1 1 8z" fill="#35b4f5" /></Svg>
        <div className="ml-[22px] flex w-[17px] flex-col items-center leading-4"><T w={16}>ITA</T><T w={9}>IT</T></div>
        <Svg s={17} vb="0 0 17 17" className="ml-[20px]"><path d="M9.500 1.500H2.500a1 1 0 0 0-1 1v9a1 1 0 0 0 1 1h9.500V8M4 15.500h7M5.500 12.500v3M8.500 12.500v3M14.500 6v9.500" stroke="#222" strokeWidth="1.200" /><rect x="12.500" y="1" width="4" height="5" rx="1" stroke="#222" strokeWidth="1.200" /></Svg>
        <Volume2 size={17} strokeWidth={1.500} className="ml-[7px]" />
        <div className="ml-[17px] mr-[19px] flex w-[62px] flex-col items-end leading-4"><T w={29}>16:27</T><T w={62}>16/10/2025</T></div>
      </div>
    </div>
  );
}

export default function App() {
  return (
    <div className="flex h-[1080px] w-[1920px] flex-col overflow-hidden font-['Open_Sans',sans-serif]">
      <TabStrip />
      <Toolbar />
      <Bookmarks />
      <div className="flex h-[911px] shrink-0 flex-col bg-[#1b1d26]">
        <EditorHeader />
        <div className="flex flex-1">
          <Chat />
          <Preview />
        </div>
      </div>
      <Taskbar />
    </div>
  );
}
